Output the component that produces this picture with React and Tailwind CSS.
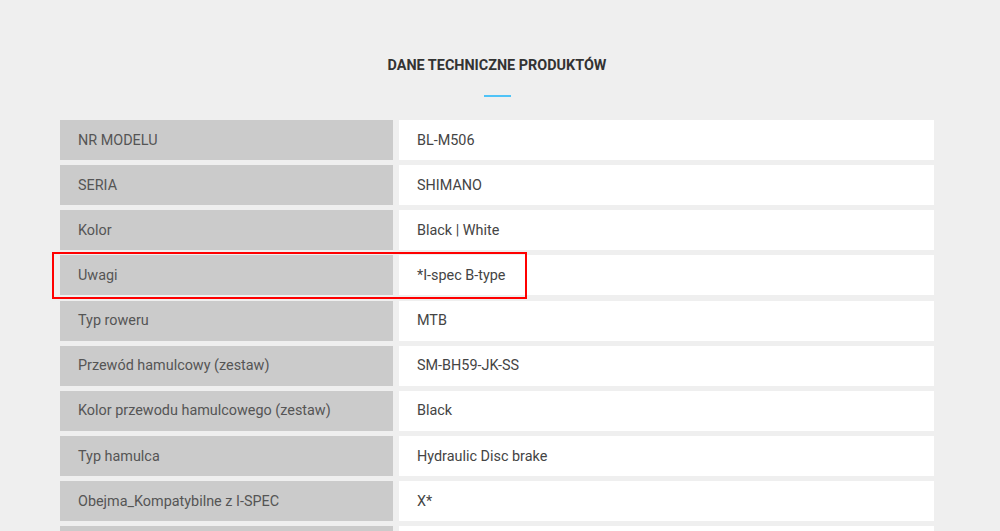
import React from 'react';

const specs = [
  ['NR MODELU', 'BL-M506'],
  ['SERIA', 'SHIMANO'],
  ['Kolor', 'Black | White'],
  ['Uwagi', '*I-spec B-type'],
  ['Typ roweru', 'MTB'],
  ['Przewód hamulcowy (zestaw)', 'SM-BH59-JK-SS'],
  ['Kolor przewodu hamulcowego (zestaw)', 'Black'],
  ['Typ hamulca', 'Hydraulic Disc brake'],
  ['Obejma_Kompatybilne z I-SPEC', 'X*'],
  ['', ''],
];

const SpecRow = ({ label, value }) => (
  <div className="flex h-[40px] gap-[6px]">
    <div className="flex w-[333px] shrink-0 items-center bg-[#cbcbcb] px-[18px] pt-px text-[#555]">{label}</div>
    <div className="flex flex-1 items-center bg-white px-[18px] pt-px text-[#444]">{value}</div>
  </div>
);

export default function App() {
  return (
    <div
      className="w-full overflow-hidden bg-[#efefef] text-[14.4px]"
      style={{ fontFamily: 'Roboto, "Liberation Sans", sans-serif', height: 531 }}
    >
      <div className="ml-[60px] w-[874px] pt-[56px]">
        <h2 className="text-center text-[14.4px] font-bold leading-[20px] text-[#333]">DANE TECHNICZNE PRODUKTÓW</h2>
        <div className="mx-auto mt-[19px] h-[2px] w-[27px] bg-[#4fc3f7]" />
        <div className="relative mt-[23px] flex flex-col gap-[5.125px]">
          {specs.map(([label, value], i) => (
            <SpecRow key={i} label={label} value={value} />
          ))}
          <div className="pointer-events-none absolute left-[-8px] top-[132px] h-[47px] w-[475px] border-2 border-[#ff0000]" />
        </div>
      </div>
    </div>
  );
}
